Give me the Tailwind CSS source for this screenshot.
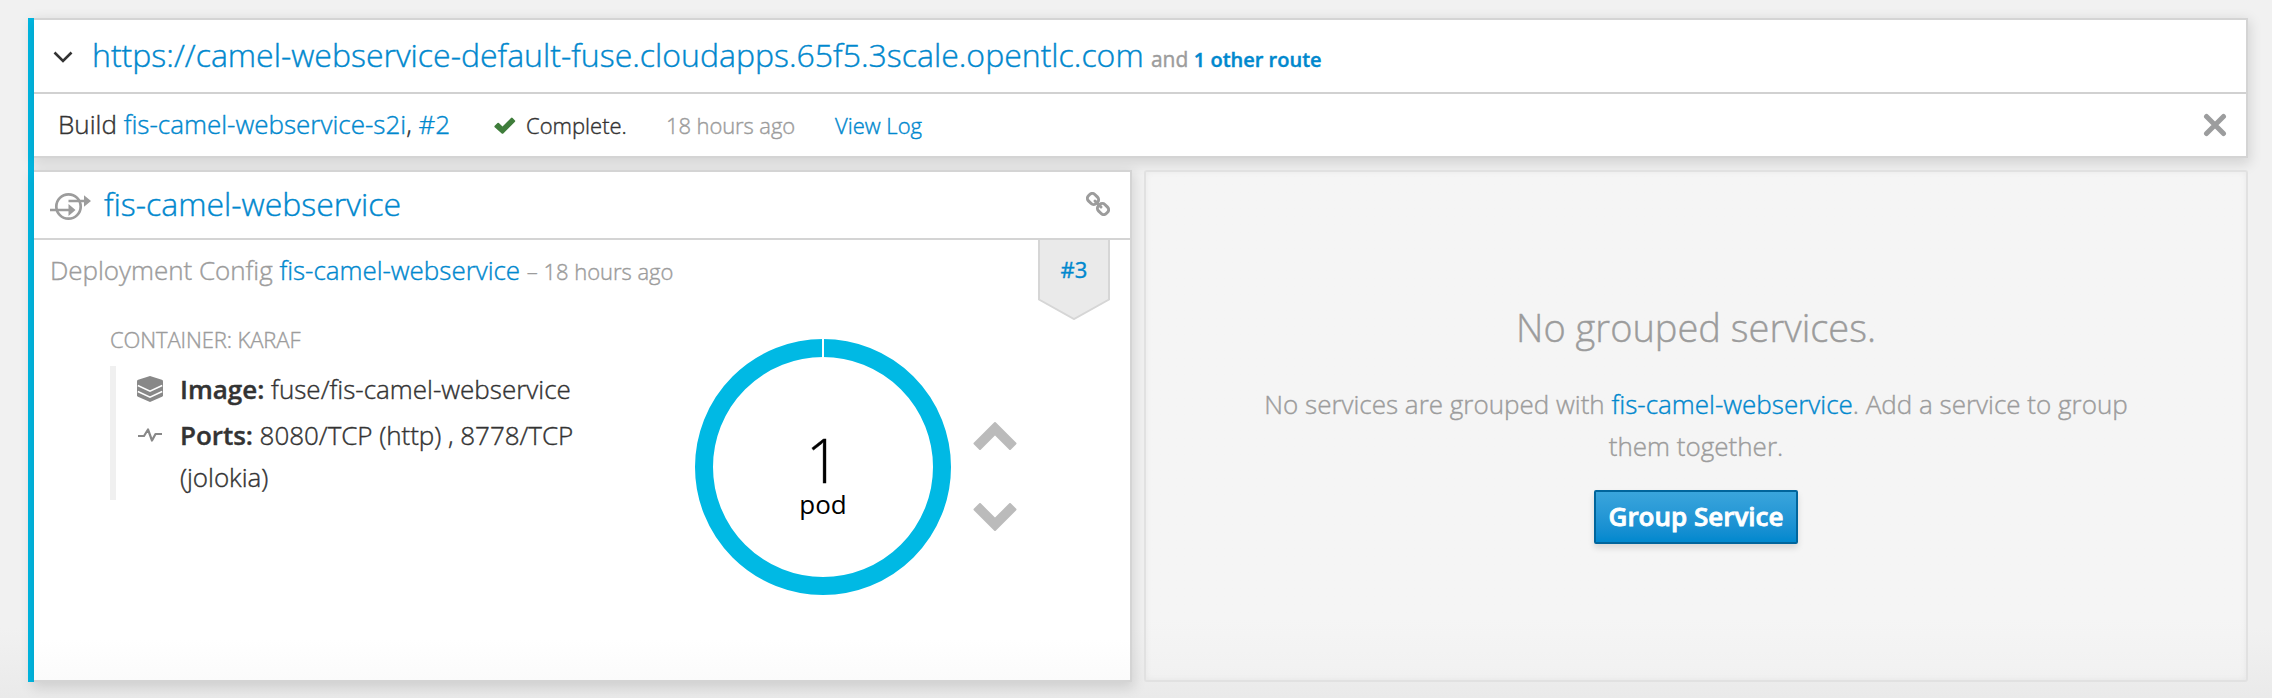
<!DOCTYPE html>
<html lang="en">
<head>
<meta charset="utf-8">
<title>Project overview</title>
<script src="https://cdn.jsdelivr.net/npm/@tailwindcss/browser@4"></script>
</head>
<body class="h-[698px] w-[2272px] overflow-hidden bg-[#f1f1f1] bg-linear-to-b from-[#f1f1f1] from-90% to-[#eaeaea] pt-[18px] pr-6 pl-7 font-['Open_Sans',sans-serif] text-[26px] leading-[42px] font-light text-[#333] [-webkit-text-stroke:0.4px]">
<main class="h-[664px] border-l-[6px] border-[#00b9e4]">
  <section class="h-[140px] border-2 border-l-0 border-[#d4d4d4] bg-white shadow-[0_4px_12px_2px_rgba(0,0,0,0.12)]">
    <header class="flex h-[74px] items-center border-b-2 border-[#d1d1d1] pl-[19px]">
      <svg class="mt-[2px] mr-[19px] h-[14px] w-[20px]" viewBox="0 0 20 14" fill="none" stroke="#333" stroke-width="2.6"><path d="M1.500 2.500 10 11l8.500-8.500"/></svg>
      <h2 class="pt-[2px] text-[32px] leading-[44px] whitespace-nowrap text-[#0088ce]">https://camel-webservice-default-fuse.cloudapps.65f5.3scale.opentlc.com <span class="-ml-px text-[21px] font-normal text-[#9c9c9c]">and <span class="text-[20px] font-semibold text-[#0088ce]">1 other route</span></span></h2>
    </header>
    <div class="flex h-[62px] items-baseline pt-[9px] pr-[19px] pl-6">
      <div class="w-[436px]">Build <span class="text-[#0088ce]">fis-camel-webservice-s2i</span>, <span class="text-[#0088ce]">#2</span></div>
      <svg class="mr-[10px] h-[17px] w-[22px]" viewBox="0 0 22 17" fill="#3f7d3b"><path d="M.7 8.700 3.500 6q.7-.6 1.400 0l3.600 3.600L17 1q.8-.8 1.600 0l2.400 2.400q.6.700 0 1.400L9.300 16.500q-.8.700-1.600 0L.7 10.300q-.7-.8 0-1.600z"/></svg>
      <div class="w-[140px] text-[22px]">Complete.</div>
      <div class="w-[169px] text-[22px] tracking-[-0.1px] text-[#9c9c9c]">18 hours ago</div>
      <div class="text-[22px] text-[#0088ce]">View Log</div>
      <svg class="ml-auto h-6 w-6 self-center -mt-[10px]" viewBox="0 0 24 24" stroke="#9c9d9e" stroke-width="5" stroke-linecap="round"><path d="m3.500 3.500 17 17m0-17-17 17"/></svg>
    </div>
  </section>

  <div class="mt-3 flex gap-3">
    <section class="h-[512px] w-[1098px] border-2 border-l-0 border-[#d4d4d4] bg-white bg-linear-to-b from-white from-92% to-[#fbfbfb] shadow-[0_4px_12px_2px_rgba(0,0,0,0.12)]">
      <header class="flex h-[68px] items-center border-b-2 border-[#d4d4d4] pr-5 pl-4">
        <svg class="mt-[2px] mr-[13px] h-[29px] w-[41px]" viewBox="0 0 41 29" fill="none" stroke="#9c9c9c"><circle cx="18.500" cy="14.500" r="12.200" stroke-width="2.700"/><path stroke-width="2.700" d="M18.500 9H35M0 18h20"/><path fill="#9c9c9c" stroke="none" d="m34 3.300 7 5.700-7 5.700zM18.500 12l7 6-7 6z"/></svg>
        <h3 class="pb-[3px] text-[32px] leading-[44px] text-[#0088ce]">fis-camel-webservice</h3>
        <svg class="-mt-[2px] ml-auto h-6 w-6" viewBox="0 0 24 24" fill="none" stroke="#9c9c9c" stroke-width="3" stroke-linecap="round"><rect x="-5.500" y="-4.500" width="11" height="9" rx="3.600" transform="translate(7 7) rotate(45)"/><rect x="-5.500" y="-4.500" width="11" height="9" rx="3.600" transform="translate(17 17) rotate(45)"/><path d="m9 9 6 6"/></svg>
      </header>
      <div class="flex h-20 justify-between pr-5 pl-4">
        <p class="pt-[9px] tracking-[-0.03px] text-[#9c9c9c]">Deployment Config <span class="text-[#0088ce]">fis-camel-webservice</span> <span class="text-[22px]">– 18 hours ago</span></p>
        <div class="relative h-20 w-[72px]">
          <svg class="absolute inset-0 h-20 w-[72px]" viewBox="0 0 72 80"><path d="M1 0V59.500L36 79 71 59.500V0" fill="#eaeaea" stroke="#d6d6d6" stroke-width="2"/></svg>
          <span class="absolute inset-x-0 top-2 text-center text-[22px] font-medium text-[#0088ce]">#3</span>
        </div>
      </div>
      <div class="flex pl-[76px]">
        <div class="w-[585px] pt-px">
          <h4 class="mb-[9px] text-[22px] leading-[36px] tracking-[-0.1px] text-[#9c9c9c]">CONTAINER: KARAF</h4>
          <div class="h-[134px] w-[500px] border-l-[6px] border-[#f0f0f0] pt-[2px] pl-[21px]">
            <div class="flex">
              <svg class="mt-[8px] mr-[17px] h-[26px] w-[26px] shrink-0" viewBox="0 0 26 26"><path fill="#888" d="M13 0 24.800 3.700Q26 4.100 26 5.300V19.300Q26 20.300 25 20.800L13 26 1 20.800Q0 20.300 0 19.300V5.300Q0 4.100 1.200 3.700z"/><path fill="none" stroke="#fff" stroke-width="1.600" d="m.8 9.600 12.200 5.600 12.200-5.600M.8 15.600 13 21.200l12.200-5.600"/></svg>
              <p><b class="font-semibold">Image:</b> fuse/fis-camel-webservice</p>
            </div>
            <div class="mt-1 flex">
              <svg class="mt-[14px] mr-[17px] h-[14px] w-[26px] shrink-0" viewBox="0 0 26 14" fill="none" stroke="#888" stroke-width="2.200" stroke-linejoin="round"><path d="M1 8h6l4-6.500 4 11L18.500 6H25"/></svg>
              <p class="w-[410px] tracking-[-0.04px]"><b class="font-semibold">Ports:</b> 8080/TCP (http) , 8778/TCP (jolokia)</p>
            </div>
          </div>
        </div>
        <div class="relative mt-[19px] h-64 w-64">
          <svg class="h-64 w-64" viewBox="0 0 256 256" fill="none"><circle cx="128" cy="128" r="119" stroke="#00b9e4" stroke-width="18"/><path d="M128 0v20" stroke="#fff" stroke-width="2"/></svg>
          <div class="absolute inset-0 pt-[80px] text-center text-black">
            <div class="text-[60px] leading-[82px]">1</div>
            <div class="-mt-[15px] leading-[36px] font-normal [-webkit-text-stroke:0]">pod</div>
          </div>
        </div>
        <div class="mt-[101px] ml-[22px] flex flex-col gap-[53px]">
          <svg class="h-[29px] w-11" viewBox="0 0 44 29" fill="#bbb" stroke="#bbb" stroke-width="2" stroke-linejoin="round"><path d="m22 2 20.500 20.500-5.500 5.500-15-15-15 15-5.500-5.500z"/></svg>
          <svg class="h-[29px] w-11" viewBox="0 0 44 29" fill="#bbb" stroke="#bbb" stroke-width="2" stroke-linejoin="round"><path d="M22 27 1.500 6.500 7 1l15 15L37 1l5.500 5.500z"/></svg>
        </div>
      </div>
    </section>

    <section class="flex h-[512px] flex-1 flex-col items-center rounded-[3px] border-2 border-[#e1e1e1] bg-[#f5f5f5] bg-linear-to-b from-[#f5f5f5] from-88% to-[#f1f1f1] pt-[124px] text-center text-[#9c9c9c] shadow-[inset_0_0_6px_rgba(0,0,0,0.05)]">
      <h3 class="pt-px text-[38px] leading-[60px]">No grouped services.</h3>
      <p class="mt-[26px] w-[900px]">No services are grouped with <span class="text-[#0088ce]">fis-camel-webservice</span>. Add a service to group them together.</p>
      <button class="mt-[23px] flex h-[54px] w-[204px] items-center justify-center rounded-[2px] border-2 border-[#00659c] bg-linear-to-b from-[#39a5dc] to-[#0088ce] pb-[2px] font-semibold text-white shadow-[0_4px_6px_rgba(3,3,3,0.12)] [-webkit-text-stroke:0.8px]">Group Service</button>
    </section>
  </div>
</main>
</body>
</html>
